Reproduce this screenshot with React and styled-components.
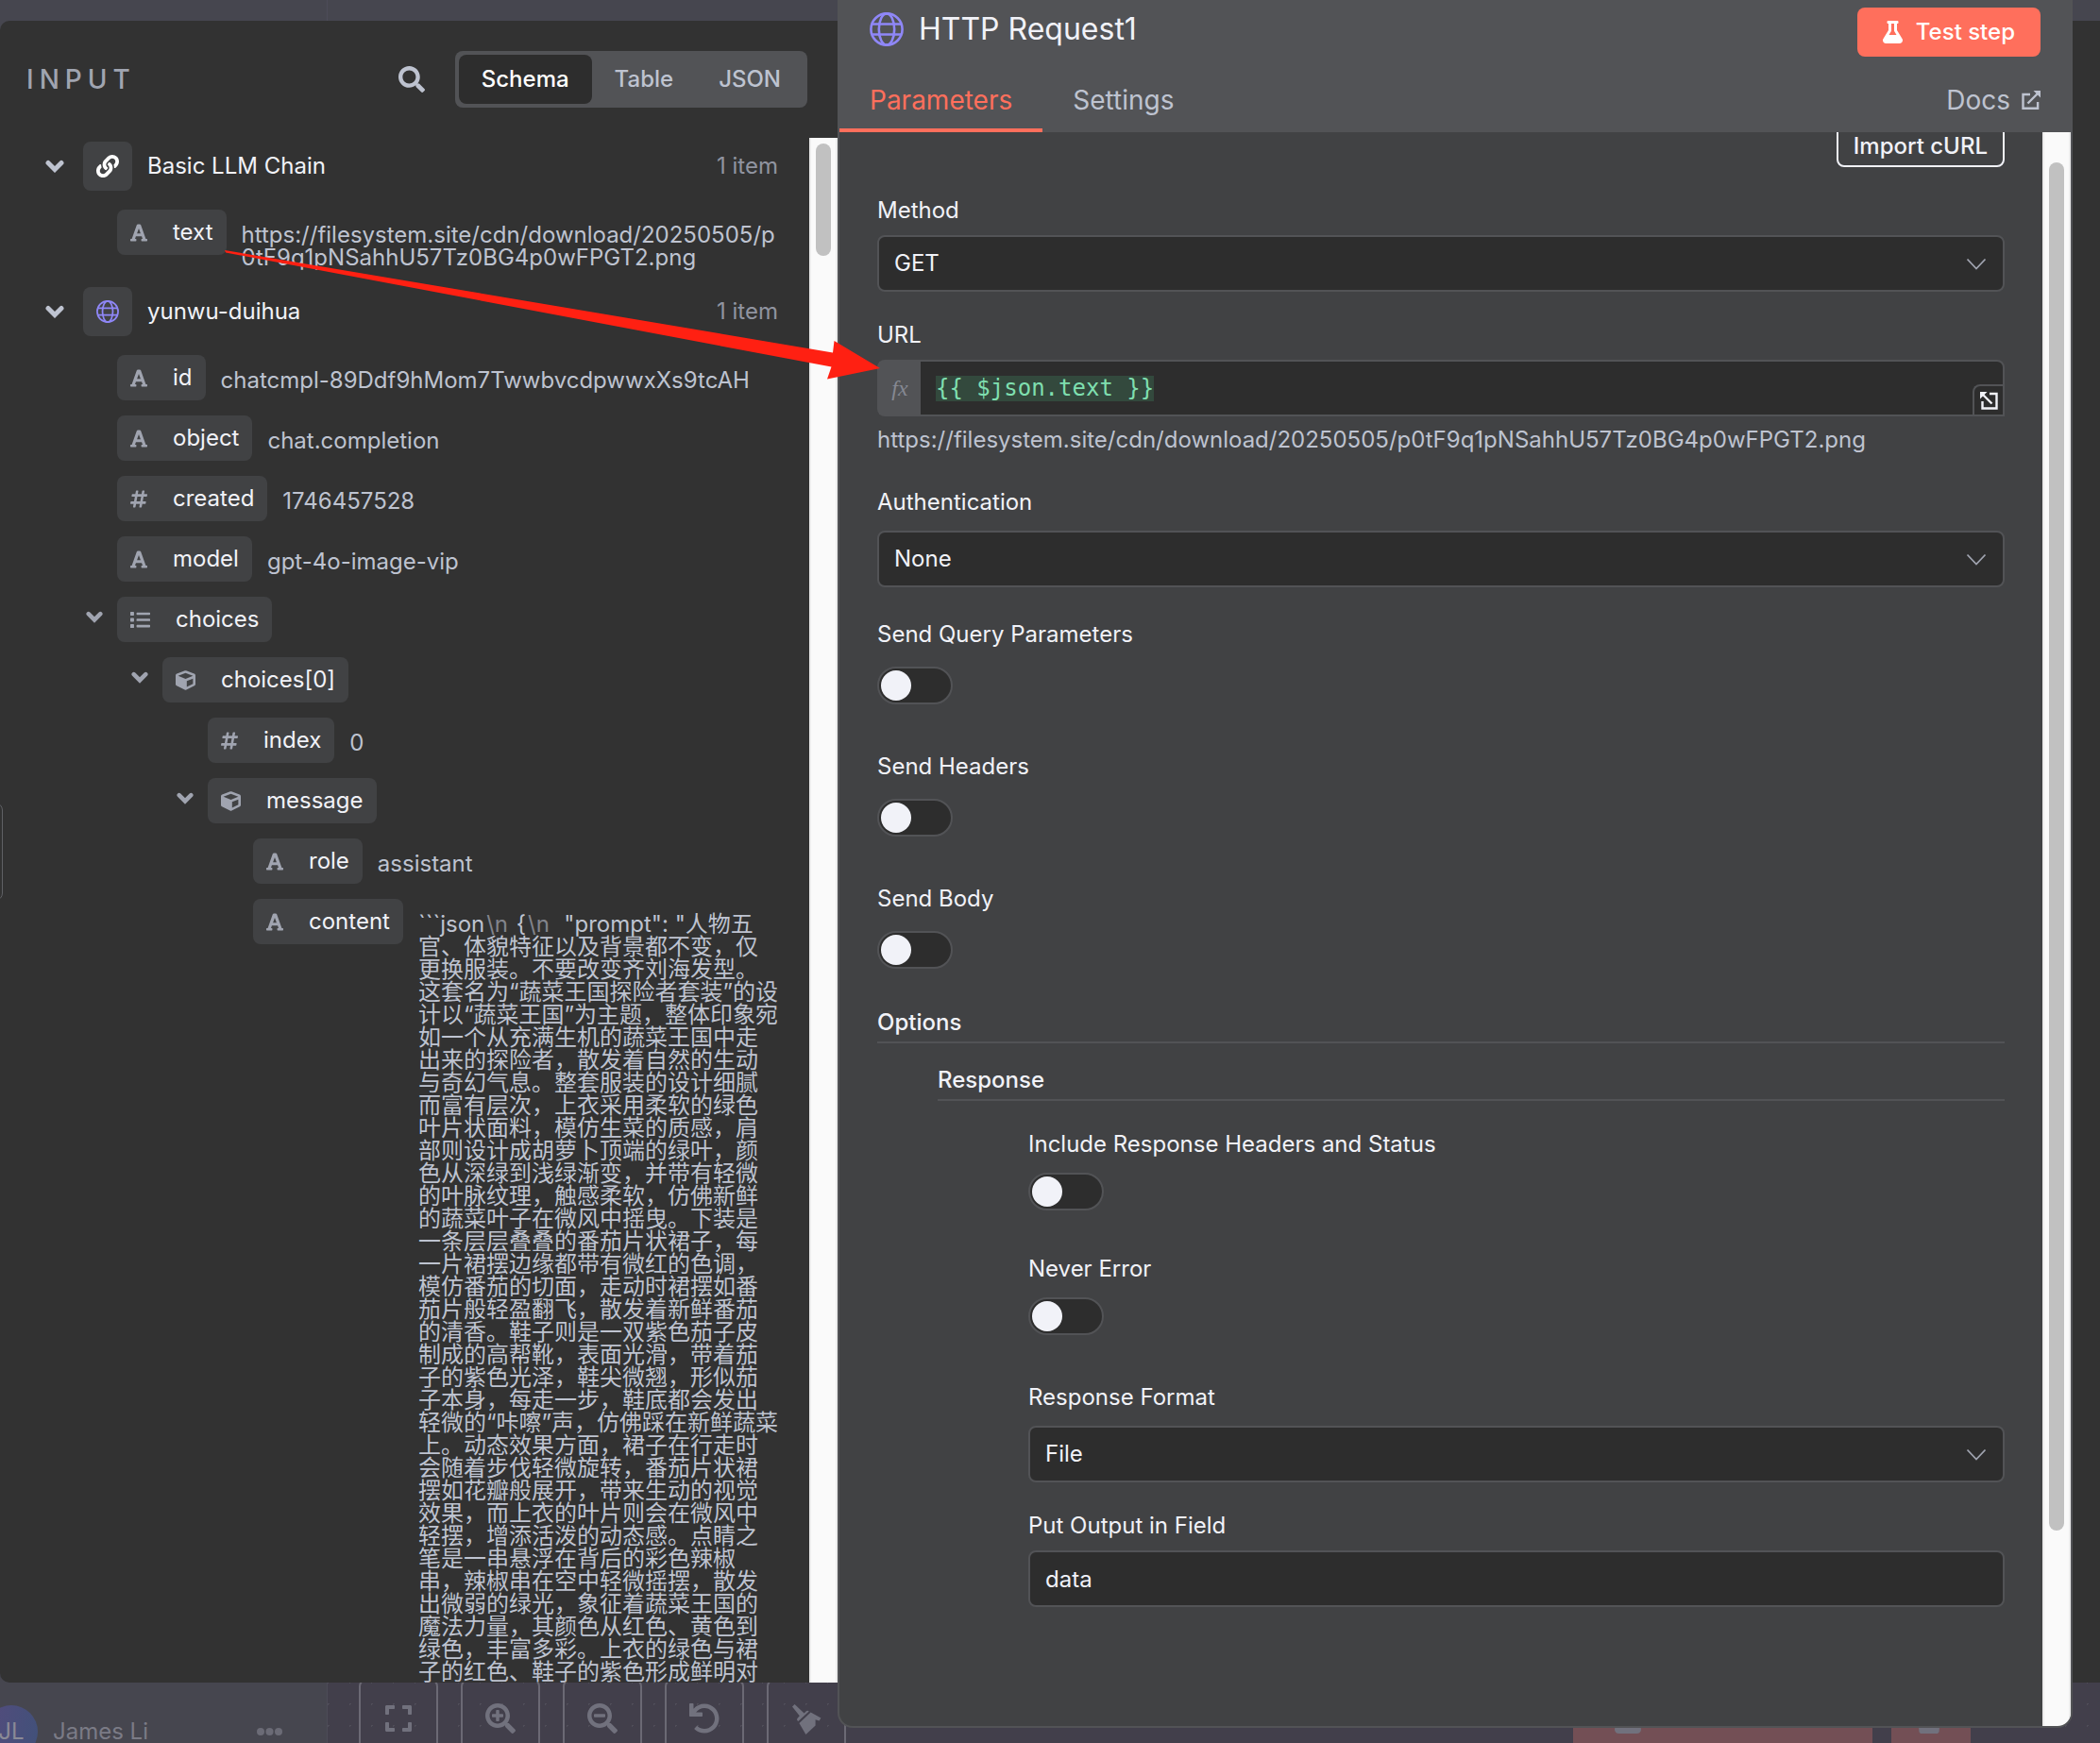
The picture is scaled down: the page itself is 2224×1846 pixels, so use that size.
import React from 'react';
import styled, { createGlobalStyle } from 'styled-components';
import {
  FaCube,
  FaExpand,
  FaFlask,
  FaFont,
  FaHashtag,
  FaLink,
  FaList,
  FaSearch,
  FaSearchMinus,
  FaSearchPlus,
  FaTrash,
  FaUndo,
} from 'react-icons/fa';

const GlobalStyle = createGlobalStyle`
  * {
    box-sizing: border-box;
  }

  body {
    margin: 0;
    background: #423f4b;
    color: #f1f2f8;
    font-family: Inter, "Noto Sans CJK SC", sans-serif;
    font-size: 24px;
    line-height: 30px;
  }

  button, input, select {
    margin: 0;
    font: inherit;
  }

  svg {
    display: block;
    flex: none;
  }
`;

/* ---------- shell ---------- */

const Page = styled.div`
  position: relative;
  height: 100vh;
  overflow: hidden;
`;

const Backdrop = styled.div`
  position: absolute;
  inset: 0;
  display: flex;
  overflow: hidden;
`;

const Sidebar = styled.aside`
  display: flex;
  align-items: flex-end;
  width: 347px;
  border-right: 1px solid #4d4c58;
  background: #46464f;
`;

const UserRow = styled.div`
  display: flex;
  align-items: center;
  flex: 1;
  margin: 0 47px -16px -16px;
  color: #7b7b86;
`;

const Avatar = styled.span`
  display: flex;
  align-items: center;
  justify-content: center;
  width: 56px;
  height: 56px;
  margin-right: 16px;
  border-radius: 50%;
  background: linear-gradient(100deg, #544b7c, #41517a);
  color: #8a8a96;
`;

const MoreDots = styled.svg`
  margin-left: auto;
`;

const Canvas = styled.div`
  display: flex;
  flex: 1;
  align-items: flex-end;
  padding: 0 137px 0 33px;
  background:
    linear-gradient(#46464f, #46464f) 0 0 / 100% 64px no-repeat,
    radial-gradient(circle, #504e59 1px, transparent 1px) 12px 22px / 23px 23px #423f4b;
`;

const CanvasControls = styled.div`
  display: flex;
  gap: 24px;
  margin-bottom: -16px;
`;

const CanvasButton = styled.button`
  display: flex;
  align-items: center;
  justify-content: center;
  width: 84px;
  height: 84px;
  border: 2px solid #6b6974;
  border-radius: 8px;
  background: none;
  color: #71717d;
`;

const RunControls = styled(CanvasControls)`
  gap: 20px;
  margin-left: auto;
`;

const RunButton = styled.button`
  display: flex;
  align-items: center;
  width: ${({ $wide }) => ($wide ? '317px' : '84px')};
  height: 84px;
  padding: 0 ${({ $wide }) => ($wide ? '42px' : '24px')};
  border: 0;
  background: #734f55;
  color: #71717d;
`;

const Modal = styled.main`
  position: relative;
  display: grid;
  grid-template-columns: minmax(0, 887fr) minmax(0, 1308fr) 29px;
  height: 100%;
`;

const OutputPanel = styled.div`
  margin: 22px 0 64px;
  background: #323232;
`;

const Track = styled.div`
  flex: none;
  width: 30px;
  border-left: 2px solid #ececec;
  border-right: 2px solid #ececec;
  background: #fafafa;
`;

const Thumb = styled.div`
  width: 16px;
  margin: 0 auto;
  border-radius: 8px;
  background: #c1c1c1;
`;

/* ---------- input panel ---------- */

const InputPanel = styled.section`
  display: flex;
  flex-direction: column;
  margin: 22px 0 64px;
  border-radius: 10px 0 0 10px;
  background: #323232;
  overflow: hidden;
`;

const InputHeader = styled.header`
  display: flex;
  align-items: center;
  padding: 32px 32px 32px 28px;
`;

const PanelTitle = styled.h2`
  flex: 1;
  margin: 0;
  color: #a0a4b0;
  font-size: 28px;
  font-weight: 500;
  letter-spacing: 6px;
`;

const IconButton = styled.button`
  display: flex;
  padding: 0;
  border: 0;
  background: none;
  color: #bec3d0;
`;

const ViewTabs = styled.div`
  display: flex;
  height: 60px;
  margin-left: 32px;
  padding: 4px;
  border-radius: 8px;
  background: #525356;
`;

const ViewTab = styled.button`
  padding: 0 24px;
  border: 0;
  border-radius: 8px;
  background: ${({ $active }) => ($active ? '#2d2d2d' : 'none')};
  color: ${({ $active }) => ($active ? '#ffffff' : '#bec3d0')};
  font-weight: 500;
`;

const InputBody = styled.div`
  display: flex;
  flex: 1;
  min-height: 0;
`;

const Tree = styled.div`
  display: flex;
  flex: 1;
  flex-direction: column;
  gap: 20px;
  min-width: 0;
  padding: 4px 33px 0 48px;
  overflow: hidden;
`;

const InputTrack = styled(Track)`
  padding-top: 6px;
`;

const InputThumb = styled(Thumb)`
  height: 119px;
`;

const GroupHeader = styled.div`
  display: flex;
  align-items: center;
  height: 52px;
`;

const GroupIcon = styled.span`
  display: flex;
  align-items: center;
  justify-content: center;
  width: 52px;
  height: 52px;
  margin: 0 16px 0 20px;
  border-radius: 8px;
  background: #414244;
  color: #ffffff;
`;

const GroupCount = styled.span`
  margin-left: auto;
  color: #9094a0;
`;

const Rows = styled.div`
  display: flex;
  flex-direction: column;
  gap: 16px;
`;

const Row = styled.div`
  display: flex;
  align-items: flex-start;
  min-height: 48px;
  padding-left: ${({ $level }) => 43 + $level * 48}px;
`;

const RowChevron = styled.span`
  flex: none;
  width: 33px;
  padding-top: 15px;
  color: #a0a4b0;
`;

const Pill = styled.span`
  display: flex;
  flex: none;
  align-items: center;
  gap: 27px;
  height: 48px;
  margin-right: 16px;
  padding: 0 14px;
  border-radius: 8px;
  background: #414244;

  svg {
    width: ${({ $wideIcon }) => ($wideIcon ? '21px' : '18px')};
    height: 21px;
    color: #a0a4b0;
  }
`;

const Value = styled.span`
  min-width: 0;
  margin-bottom: -1px;
  padding-top: 15px;
  color: #bec3d0;
  line-height: 24px;
  overflow-wrap: anywhere;
  white-space: ${({ $pre }) => ($pre ? 'pre' : 'normal')};
`;

const Escape = styled.span`
  padding: 0 2px;
  color: #82848c;
`;

/* ---------- node detail panel ---------- */

const DetailPanel = styled.section`
  display: flex;
  flex-direction: column;
  height: calc(100vh - 16px);
  border: 2px solid #525356;
  border-top: 0;
  border-radius: 0 0 16px 16px;
  background: #414244;
  overflow: hidden;
`;

const DetailHeader = styled.header`
  display: flex;
  flex-direction: column;
  justify-content: space-between;
  height: 140px;
  padding: 8px 32px 0;
  background: #525356;
`;

const TitleRow = styled.div`
  display: flex;
  justify-content: space-between;
`;

const NodeTitle = styled.h1`
  display: flex;
  align-items: center;
  gap: 16px;
  height: 46px;
  margin: 0;
  font-size: 32px;
  font-weight: 400;
`;

const TestButton = styled.button`
  display: flex;
  align-items: center;
  gap: 14px;
  height: 52px;
  padding: 0 27px;
  border: 0;
  border-radius: 8px;
  background: #ff6f5c;
  color: #ffffff;
  font-weight: 500;

  svg {
    width: 21px;
    height: 24px;
  }
`;

const TabRow = styled.nav`
  display: flex;
  margin: 0 0 0 -32px;
`;

const Tab = styled.a`
  display: flex;
  align-items: center;
  gap: 12px;
  height: 68px;
  padding: 4px ${({ $last }) => ($last ? '0' : '32px')} 0;
  margin-left: ${({ $last }) => ($last ? 'auto' : '0')};
  border-bottom: 4px solid ${({ $active }) => ($active ? '#ff6f5c' : 'transparent')};
  color: ${({ $active }) => ($active ? '#ff6f5c' : '#bec3d0')};
  font-size: 28px;
  text-decoration: none;
`;

const DetailBody = styled.div`
  display: flex;
  flex: 1;
  min-height: 0;
`;

const Form = styled.form`
  display: flex;
  flex: 1;
  flex-direction: column;
  min-width: 0;
  padding: 0 40px;
  overflow: hidden;
`;

const DetailTrack = styled(Track)`
  padding-top: 32px;
`;

const DetailThumb = styled(Thumb)`
  height: 87.5%;
`;

const ImportButton = styled.button`
  align-self: flex-end;
  height: 44px;
  margin-top: -7px;
  padding: 0 16px;
  border: 2px solid #f1f2f8;
  border-radius: 8px;
  background: none;
  color: #f1f2f8;
  font-weight: 500;
`;

const Field = styled.div`
  display: flex;
  flex-direction: column;
  gap: ${({ $gap }) => $gap || 10}px;
  margin-top: ${({ $top }) => $top || 30}px;
`;

const Label = styled.label`
  line-height: 32px;
`;

const SelectBox = styled.div`
  position: relative;
  display: flex;

  svg {
    position: absolute;
    top: 24px;
    right: 19px;
    pointer-events: none;
  }
`;

const Select = styled.select`
  flex: 1;
  height: 60px;
  padding: 0 16px;
  border: 2px solid #525356;
  border-radius: 8px;
  appearance: none;
  background: #2d2d2d;
  color: #f1f2f8;
`;

const TextInput = styled.input`
  height: 60px;
  padding: 0 16px;
  border: 2px solid #525356;
  border-radius: 8px;
  background: #2d2d2d;
  color: #f1f2f8;
`;

const ExpressionBox = styled.div`
  position: relative;
  display: flex;
  height: 60px;
  border: 2px solid #525356;
  border-radius: 8px 8px 0 8px;
  background: #2d2d2d;
`;

const FxTag = styled.span`
  display: flex;
  align-items: center;
  justify-content: center;
  width: 44px;
  background: #525356;
  color: #858892;
  font-family: "Liberation Serif", serif;
  font-style: italic;
`;

const ExpressionInput = styled.div`
  display: flex;
  flex: 1;
  align-items: center;
  padding: 0 16px;
  font-family: "DejaVu Sans Mono", monospace;
  line-height: 27px;
  outline: none;
  white-space: pre;
`;

const Expression = styled.span`
  background: #33493d;
  color: #7fdfaf;
`;

const ExpandButton = styled(IconButton)`
  position: absolute;
  right: 0;
  bottom: 0;
  align-items: center;
  justify-content: center;
  width: 32px;
  height: 32px;
  border-top: 2px solid #525356;
  border-left: 2px solid #525356;
  border-radius: 8px 0 0 0;
  background: #2d2d2d;
  color: #f1f2f8;
`;

const Hint = styled.p`
  margin: 0 0 5px;
  color: #bec3d0;
`;

const Switch = styled.input`
  width: 80px;
  height: 40px;
  padding: 2px;
  border: 2px solid #525356;
  border-radius: 20px;
  appearance: none;
  background: #2d2d2d;

  &::before {
    content: "";
    display: block;
    width: 32px;
    height: 32px;
    border-radius: 50%;
    background: #f1f2f8;
  }

  &:checked::before {
    margin-left: auto;
  }
`;

const SectionTitle = styled.h3`
  margin: ${({ $nested }) => ($nested ? '24px 0 0 64px' : '42px 0 0')};
  padding-bottom: 5px;
  border-bottom: 2px solid #525356;
  font-size: 24px;
  font-weight: 500;
`;

const OptionFields = styled.div`
  padding-left: 160px;
`;

/* ---------- overlays ---------- */

const PanelHandle = styled.span`
  position: absolute;
  top: 850px;
  left: -16px;
  width: 19px;
  height: 104px;
  border: 1px solid #5f6165;
  border-radius: 8px;
`;

const Arrow = styled.svg`
  position: absolute;
  top: 0;
  left: 0;
  pointer-events: none;
`;

/* ---------- icons ---------- */

const GlobeIcon = ({ size, color = '#8f87f7' }) => (
  <svg width={size} height={size} viewBox="0 0 36 36" fill="none" stroke={color} strokeWidth="2.6">
    <circle cx="18" cy="18" r="16.6" />
    <ellipse cx="18" cy="18" rx="8.2" ry="16.6" />
    <path d="M2.5 12.5h31M2.5 23.5h31" />
  </svg>
);

const ChevronIcon = ({ width, color = '#bec3d0' }) => (
  <svg width={width} viewBox="0 0 20 14" fill="none" stroke={color} strokeWidth="5" strokeLinecap="round">
    <path d="M3 3.5l7 7 7-7" />
  </svg>
);

const CaretIcon = () => (
  <svg width="22" height="14" viewBox="0 0 22 14" fill="none" stroke="#a0a4b0" strokeWidth="1.8">
    <path d="M1.5 1.5L11 11.5l9.5-10" />
  </svg>
);

const ExternalIcon = () => (
  <svg width="20" height="20" viewBox="0 0 20 20" fill="none" stroke="#bec3d0" strokeWidth="2.4">
    <path d="M9 4H1.5v14.8h15.6V12M6.5 13.5L17 3" />
    <path d="M12.5 0H20v7.5z" fill="#bec3d0" stroke="none" />
  </svg>
);

const PopoutIcon = () => (
  <svg width="20" height="20" viewBox="0 0 20 20" fill="none" stroke="currentColor" strokeWidth="2.4">
    <path d="M11 3h7.5v15.5H3.5V11M4 4l9.5 9.5" />
    <path d="M1 1h7.5L1 8.5z" fill="currentColor" stroke="none" />
  </svg>
);

const BroomIcon = () => (
  <svg width="32" height="33" viewBox="0 0 32 33" fill="currentColor">
    <path d="M1 3.5L3.6 1l10 9.6 2-2.1c1-1 2.4-.9 3.1 0L7.4 19c-1.5-.8-1.7-2.2-.8-3.2l2.2-2.6z" />
    <path d="M20.6 9.6L31.4 15.6 29.6 18.6 25.6 17.2 25.6 23.5 15.4 33 8.4 21z" />
  </svg>
);

/* ---------- data ---------- */

const typeIcons = { text: FaFont, number: FaHashtag, list: FaList, object: FaCube };

const promptLines = `人物五
官、体貌特征以及背景都不变，仅
更换服装。不要改变齐刘海发型。
这套名为“蔬菜王国探险者套装”的设
计以“蔬菜王国”为主题，整体印象宛
如一个从充满生机的蔬菜王国中走
出来的探险者，散发着自然的生动
与奇幻气息。整套服装的设计细腻
而富有层次，上衣采用柔软的绿色
叶片状面料，模仿生菜的质感，肩
部则设计成胡萝卜顶端的绿叶，颜
色从深绿到浅绿渐变，并带有轻微
的叶脉纹理，触感柔软，仿佛新鲜
的蔬菜叶子在微风中摇曳。下装是
一条层层叠叠的番茄片状裙子，每
一片裙摆边缘都带有微红的色调，
模仿番茄的切面，走动时裙摆如番
茄片般轻盈翻飞，散发着新鲜番茄
的清香。鞋子则是一双紫色茄子皮
制成的高帮靴，表面光滑，带着茄
子的紫色光泽，鞋尖微翘，形似茄
子本身，每走一步，鞋底都会发出
轻微的“咔嚓”声，仿佛踩在新鲜蔬菜
上。动态效果方面，裙子在行走时
会随着步伐轻微旋转，番茄片状裙
摆如花瓣般展开，带来生动的视觉
效果，而上衣的叶片则会在微风中
轻摆，增添活泼的动态感。点睛之
笔是一串悬浮在背后的彩色辣椒
串，辣椒串在空中轻微摇摆，散发
出微弱的绿光，象征着蔬菜王国的
魔法力量，其颜色从红色、黄色到
绿色，丰富多彩。上衣的绿色与裙
子的红色、鞋子的紫色形成鲜明对`;

const contentValue = (
  <>
    ```json<Escape>\n</Escape> {'{'}<Escape>\n</Escape>{'  "prompt": "'}{promptLines}
  </>
);

const imageUrl = 'https://filesystem.site/cdn/download/20250505/p0tF9q1pNSahhU57Tz0BG4p0wFPGT2.png';

const groups = [
  {
    name: 'Basic LLM Chain',
    icon: <FaLink size={24} />,
    rows: [{ level: 0, type: 'text', name: 'text', value: imageUrl }],
  },
  {
    name: 'yunwu-duihua',
    icon: <GlobeIcon size={24} />,
    rows: [
      { level: 0, type: 'text', name: 'id', value: 'chatcmpl-89Ddf9hMom7TwwbvcdpwwxXs9tcAH' },
      { level: 0, type: 'text', name: 'object', value: 'chat.completion' },
      { level: 0, type: 'number', name: 'created', value: '1746457528' },
      { level: 0, type: 'text', name: 'model', value: 'gpt-4o-image-vip' },
      { level: 0, type: 'list', name: 'choices' },
      { level: 1, type: 'object', name: 'choices[0]' },
      { level: 2, type: 'number', name: 'index', value: '0' },
      { level: 2, type: 'object', name: 'message' },
      { level: 3, type: 'text', name: 'role', value: 'assistant' },
      { level: 3, type: 'text', name: 'content', value: contentValue, pre: true },
    ],
  },
];

/* ---------- pieces ---------- */

const SchemaRow = ({ row }) => {
  const TypeIcon = typeIcons[row.type];
  return (
    <Row $level={row.level}>
      <RowChevron>{!row.value && <ChevronIcon width={18} color="#a0a4b0" />}</RowChevron>
      <Pill $wideIcon={!row.value}>
        <TypeIcon />
        {row.name}
      </Pill>
      {row.value && <Value $pre={row.pre}>{row.value}</Value>}
    </Row>
  );
};

const SelectField = ({ id, label, value, top, gap }) => (
  <Field $top={top} $gap={gap}>
    <Label htmlFor={id}>{label}</Label>
    <SelectBox>
      <Select id={id} defaultValue={value}>
        <option>{value}</option>
      </Select>
      <CaretIcon />
    </SelectBox>
  </Field>
);

const SwitchField = ({ id, label, top, gap }) => (
  <Field $top={top} $gap={gap}>
    <Label htmlFor={id}>{label}</Label>
    <Switch id={id} type="checkbox" />
  </Field>
);

const App = () => {
  return (
    <Page>
      <GlobalStyle />
      <Backdrop>
        <Sidebar>
          <UserRow>
            <Avatar>JL</Avatar>
            James Li
            <MoreDots width="27" height="8" viewBox="0 0 27 8" fill="#6b6b76">
              <circle cx="4" cy="4" r="4" />
              <circle cx="13.5" cy="4" r="4" />
              <circle cx="23" cy="4" r="4" />
            </MoreDots>
          </UserRow>
        </Sidebar>
        <Canvas>
          <CanvasControls>
            <CanvasButton aria-label="Fit view"><FaExpand size={32} /></CanvasButton>
            <CanvasButton aria-label="Zoom in"><FaSearchPlus size={32} /></CanvasButton>
            <CanvasButton aria-label="Zoom out"><FaSearchMinus size={32} /></CanvasButton>
            <CanvasButton aria-label="Reset zoom"><FaUndo size={32} /></CanvasButton>
            <CanvasButton aria-label="Tidy up"><BroomIcon /></CanvasButton>
          </CanvasControls>
          <RunControls>
            <RunButton $wide aria-label="Run"><FaFlask size={32} /></RunButton>
            <RunButton aria-label="Delete"><FaTrash size={32} /></RunButton>
          </RunControls>
        </Canvas>
      </Backdrop>

      <Modal>
        <InputPanel>
          <InputHeader>
            <PanelTitle>INPUT</PanelTitle>
            <IconButton aria-label="Search"><FaSearch size={28} /></IconButton>
            <ViewTabs>
              <ViewTab $active>Schema</ViewTab>
              <ViewTab>Table</ViewTab>
              <ViewTab>JSON</ViewTab>
            </ViewTabs>
          </InputHeader>
          <InputBody>
            <Tree>
              {groups.map((group) => (
                <React.Fragment key={group.name}>
                  <GroupHeader>
                    <ChevronIcon width={20} />
                    <GroupIcon>{group.icon}</GroupIcon>
                    {group.name}
                    <GroupCount>1 item</GroupCount>
                  </GroupHeader>
                  <Rows>
                    {group.rows.map((row) => (
                      <SchemaRow key={row.name} row={row} />
                    ))}
                  </Rows>
                </React.Fragment>
              ))}
            </Tree>
            <InputTrack>
              <InputThumb />
            </InputTrack>
          </InputBody>
        </InputPanel>

        <DetailPanel>
          <DetailHeader>
            <TitleRow>
              <NodeTitle>
                <GlobeIcon size={36} />
                HTTP Request1
              </NodeTitle>
              <TestButton>
                <FaFlask />
                Test step
              </TestButton>
            </TitleRow>
            <TabRow>
              <Tab href="#parameters" $active>Parameters</Tab>
              <Tab href="#settings">Settings</Tab>
              <Tab href="#docs" $last>
                Docs
                <ExternalIcon />
              </Tab>
            </TabRow>
          </DetailHeader>
          <DetailBody>
            <Form>
              <ImportButton type="button">Import cURL</ImportButton>
              <SelectField id="method" label="Method" value="GET" />
              <Field>
                <Label as="span" id="url-label">URL</Label>
                <ExpressionBox>
                  <FxTag>fx</FxTag>
                  <ExpressionInput
                    role="textbox"
                    aria-labelledby="url-label"
                    contentEditable
                    suppressContentEditableWarning
                    spellCheck={false}
                  >
                    <Expression>{'{{ $json.text }}'}</Expression>
                  </ExpressionInput>
                  <ExpandButton type="button" aria-label="Expand">
                    <PopoutIcon />
                  </ExpandButton>
                </ExpressionBox>
                <Hint>{imageUrl}</Hint>
              </Field>
              <SelectField id="auth" label="Authentication" value="None" gap={14} />
              <SwitchField id="query" label="Send Query Parameters" top={34} gap={18} />
              <SwitchField id="headers" label="Send Headers" top={50} gap={18} />
              <SwitchField id="body" label="Send Body" top={50} gap={18} />
              <SectionTitle>Options</SectionTitle>
              <SectionTitle $nested>Response</SectionTitle>
              <OptionFields>
                <SwitchField id="status" label="Include Response Headers and Status" gap={14} />
                <SwitchField id="never-error" label="Never Error" top={46} gap={14} />
                <SelectField id="format" label="Response Format" value="File" top={50} gap={14} />
                <Field>
                  <Label htmlFor="output-field">Put Output in Field</Label>
                  <TextInput id="output-field" defaultValue="data" />
                </Field>
              </OptionFields>
            </Form>
            <DetailTrack>
              <DetailThumb />
            </DetailTrack>
          </DetailBody>
        </DetailPanel>

        <OutputPanel />
      </Modal>

      <PanelHandle />
      <Arrow width="940" height="410" viewBox="0 0 940 410" fill="#ff2012">
        <path d="M238 265l644 108.500 1.500-12.500 48.500 29-56 11.500 4.500-13L239 267.500z" />
      </Arrow>
    </Page>
  );
};

export default App;
